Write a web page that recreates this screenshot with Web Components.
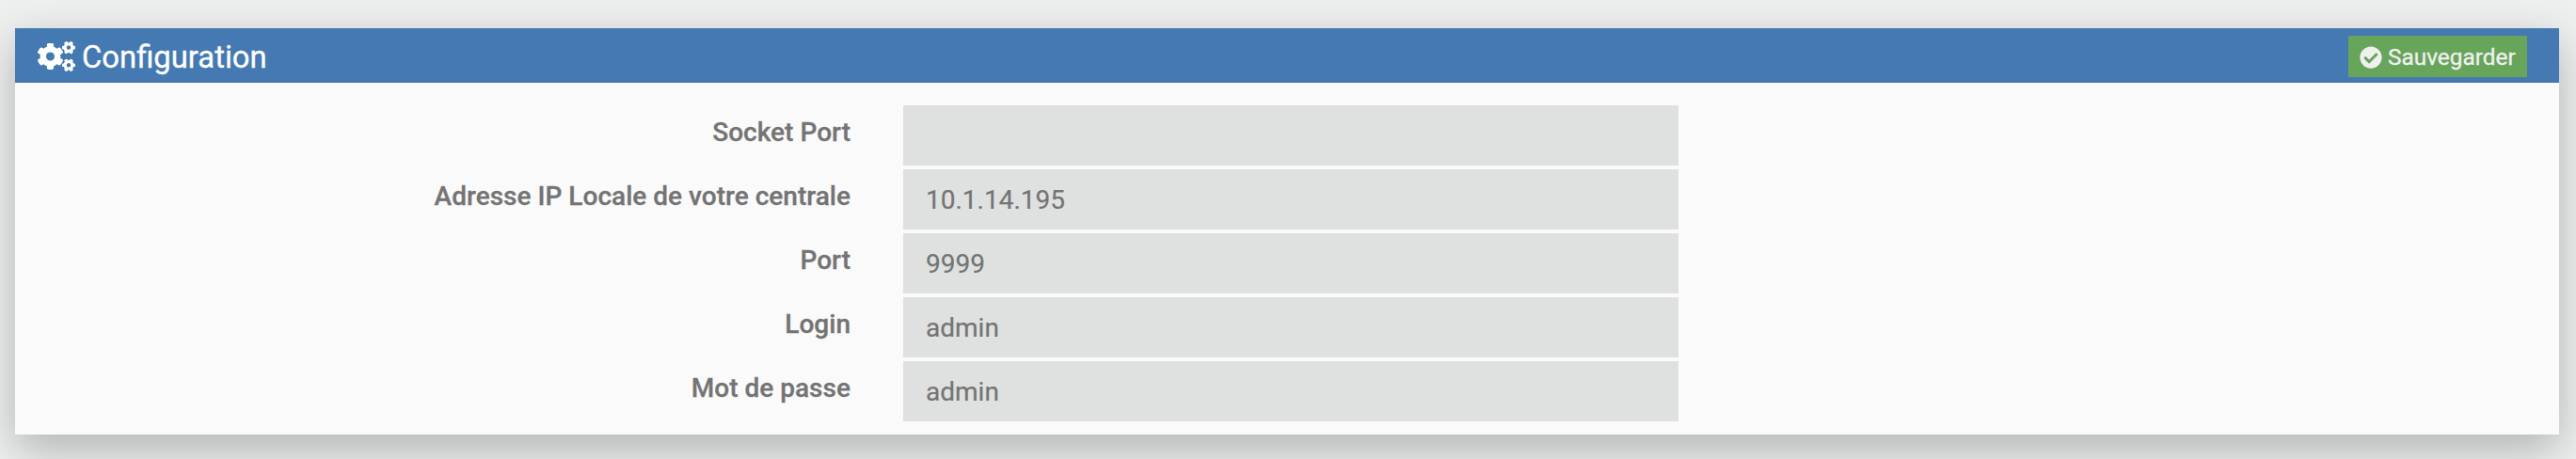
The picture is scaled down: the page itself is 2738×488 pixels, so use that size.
<!DOCTYPE html>
<html lang="fr">
<head>
<meta charset="utf-8">
<title>Configuration</title>
<style>
html,body{margin:0;height:100%;}
body{background:#eef0ef;font-family:Roboto,"Liberation Sans",sans-serif;overflow:hidden;}
</style>
</head>
<body>
<config-panel heading="Configuration">
  <save-button slot="action">Sauvegarder</save-button>
  <config-field label="Socket Port"></config-field>
  <config-field label="Adresse IP Locale de votre centrale">10.1.14.195</config-field>
  <config-field label="Port">9999</config-field>
  <config-field label="Login">admin</config-field>
  <config-field label="Mot de passe">admin</config-field>
</config-panel>
<script>
class CogsIcon extends HTMLElement {
  constructor() {
    super();
    this.attachShadow({mode: "open"}).innerHTML = `
      <style>:host{display:block;width:40px;height:32px}svg{display:block;width:100%;height:100%}</style>
      <svg viewBox="0 0 640 512" fill="currentColor"><defs><path id="small" d="M512.1 191l-8.2 14.3c-3 5.3-9.4 7.5-15.1 5.4-11.8-4.4-22.6-10.7-32.1-18.6-4.6-3.8-5.8-10.5-2.8-15.7l8.2-14.3c-6.9-8-12.3-17.3-15.9-27.4h-16.5c-6 0-11.200-4.300-12.200-10.300-2-12-2.100-24.600 0-37.100 1-6 6.200-10.400 12.200-10.400h16.500c3.600-10.100 9-19.400 15.900-27.400l-8.200-14.300c-3-5.200-1.900-11.900 2.800-15.700 9.500-7.900 20.400-14.200 32.100-18.600 5.700-2.100 12.100.1 15.100 5.400l8.200 14.300c10.500-1.900 21.200-1.900 31.700 0L552 6.300c3-5.300 9.400-7.500 15.100-5.400 11.800 4.400 22.600 10.700 32.100 18.600 4.600 3.800 5.800 10.500 2.800 15.700l-8.200 14.300c6.900 8 12.300 17.300 15.900 27.400h16.500c6 0 11.200 4.300 12.200 10.300 2 12 2.100 24.600 0 37.100-1 6-6.200 10.400-12.200 10.400h-16.500c-3.600 10.100-9 19.400-15.900 27.400l8.200 14.300c3 5.200 1.900 11.900-2.800 15.700-9.500 7.900-20.400 14.200-32.100 18.600-5.700 2.100-12.100-.1-15.100-5.400l-8.200-14.300c-10.400 1.900-21.200 1.900-31.700 0zm-10.500-58.800c38.500 29.600 82.400-14.300 52.800-52.800-38.500-29.700-82.400 14.300-52.800 52.800z"/></defs>
      <use href="#small"/><use href="#small" y="298.900"/>
      <path d="M386.300 286.100l33.700 16.800c10.100 5.800 14.500 18.100 10.500 29.100-8.900 24.200-26.400 46.400-42.600 65.800-7.400 8.900-20.200 11.100-30.300 5.300l-29.100-16.800c-16 13.700-34.600 24.600-54.900 31.700v33.600c0 11.600-8.300 21.600-19.700 23.600-24.600 4.200-50.400 4.400-75.900 0-11.500-2-20-11.900-20-23.600V418c-20.300-7.200-38.900-18-54.900-31.700L74 403c-10 5.800-22.900 3.600-30.300-5.300-16.200-19.400-33.300-41.600-42.200-65.700-4-10.900.4-23.200 10.500-29.100l33.300-16.800c-3.900-20.900-3.900-42.400 0-63.400L12 205.800c-10.100-5.800-14.600-18.100-10.500-29 8.900-24.200 26-46.400 42.200-65.800 7.400-8.900 20.200-11.100 30.300-5.300l29.100 16.800c16-13.700 34.600-24.600 54.900-31.700V57.100c0-11.500 8.200-21.500 19.600-23.500 24.600-4.200 50.500-4.400 76-.1 11.500 2 20 11.900 20 23.600v33.600c20.300 7.200 38.900 18 54.900 31.700l29.100-16.800c10-5.800 22.900-3.600 30.300 5.300 16.200 19.400 33.200 41.600 42.100 65.800 4 10.900.1 23.200-10 29.100l-33.700 16.800c3.900 21 3.900 42.500 0 63.500zm-117.600 21.100c59.200-77-28.700-164.900-105.700-105.700-59.200 77 28.700 164.900 105.700 105.700z"/></svg>`;
  }
}
customElements.define("cogs-icon", CogsIcon);

class SaveButton extends HTMLElement {
  constructor() {
    super();
    this.attachShadow({mode: "open"}).innerHTML = `
      <style>
      :host{display:block}
      button{display:flex;align-items:center;gap:6px;box-sizing:border-box;width:190px;height:44px;padding:2px 0 0 12px;border:0;background:#67a55b;color:#f0f0f0;font:400 24.4px/36px Roboto,"Liberation Sans",sans-serif;white-space:nowrap;-webkit-text-stroke:.3px currentColor}
      svg{width:24px;height:24px;flex:none}
      </style>
      <button><svg viewBox="0 0 512 512" fill="currentColor"><path d="M504 256c0 136.967-111.033 248-248 248S8 392.967 8 256 119.033 8 256 8s248 111.033 248 248zM227.314 387.314l184-184c6.248-6.248 6.248-16.379 0-22.627l-22.627-22.627c-6.248-6.249-16.379-6.249-22.628 0L216 308.118l-70.059-70.059c-6.248-6.248-16.379-6.248-22.628 0l-22.627 22.627c-6.248 6.248-6.248 16.379 0 22.627l104 104c6.249 6.249 16.379 6.249 22.628.001z"/></svg><span><slot></slot></span></button>`;
  }
}
customElements.define("save-button", SaveButton);

class ConfigField extends HTMLElement {
  constructor() {
    super();
    this.attachShadow({mode: "open"}).innerHTML = `
      <style>
      :host{display:grid;grid-template-columns:888px 824px;column-gap:56px;height:64px;color:#747474;font-size:28px;line-height:40px}
      .label{text-align:right;font-weight:500;padding-top:9px;letter-spacing:.02px;-webkit-text-stroke:.3px currentColor}
      .value{background:#dfe1e0;padding:13px 24px 11px;-webkit-text-stroke:.2px currentColor}
      </style>
      <div class="label"></div><div class="value"><slot></slot></div>`;
    this.shadowRoot.querySelector(".label").textContent = this.getAttribute("label");
  }
}
customElements.define("config-field", ConfigField);

class ConfigPanel extends HTMLElement {
  constructor() {
    super();
    this.attachShadow({mode: "open"}).innerHTML = `
      <style>
      :host{display:block;padding:30px 18px 26px 16px}
      section{height:432px;background:#fafafa;box-shadow:0 16px 44px rgba(0,0,0,.26)}
      header{display:flex;align-items:center;box-sizing:border-box;height:58px;padding:0 34px 0 24px;background:#4579b2;color:#fff}
      h3{flex:1;margin:3px 0 0 7px;font-weight:400;font-size:32.800px;line-height:40px;-webkit-text-stroke:.3px currentColor}
      .action{margin-top:2px}
      cogs-icon{margin-top:2px}
      .rows{display:flex;flex-direction:column;gap:4px;padding-top:24px}
      </style>
      <section>
        <header><cogs-icon></cogs-icon><h3></h3><div class="action"><slot name="action"></slot></div></header>
        <div class="rows"><slot></slot></div>
      </section>`;
    this.shadowRoot.querySelector("h3").textContent = this.getAttribute("heading");
  }
}
customElements.define("config-panel", ConfigPanel);
</script>
</body>
</html>
